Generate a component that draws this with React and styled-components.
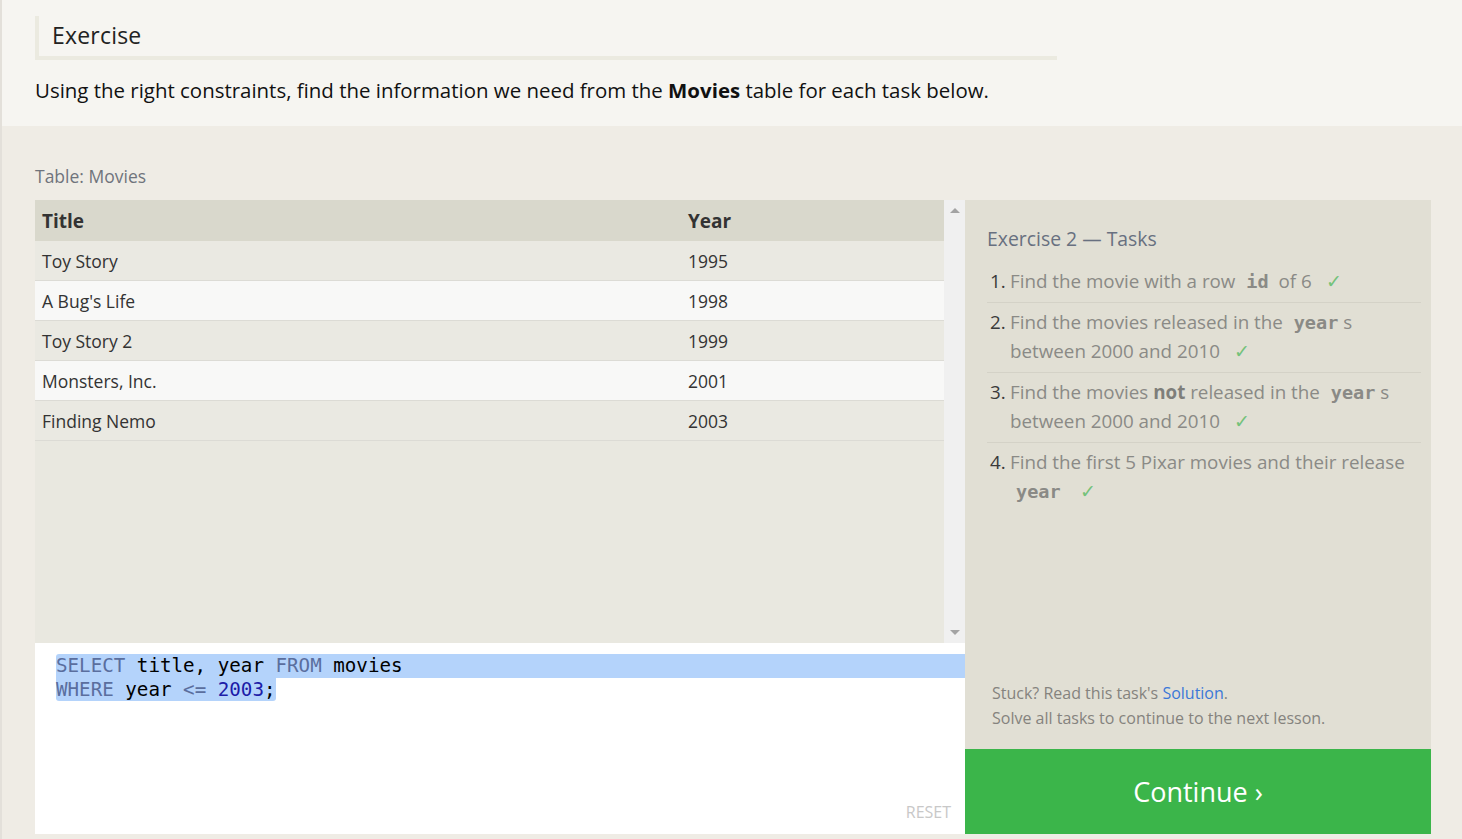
import React from 'react';
import styled, { createGlobalStyle } from 'styled-components';

const GlobalStyle = createGlobalStyle`
  html, body {
    margin: 0;
    padding: 0;
    background: #efece5;
  }
  body {
    font-family: 'Open Sans', 'Noto Sans', sans-serif;
    color: #333;
  }
`;

const Page = styled.div`
  border-left: 2px solid #e3e0da;
  min-height: 839px;
  box-sizing: border-box;
  display: flex;
  flex-direction: column;
`;

const Intro = styled.section`
  background: #f6f5f1;
  height: 126px;
  box-sizing: border-box;
  padding: 16px 0 0 33px;
`;

const Heading = styled.h2`
  margin: 0;
  width: 1022px;
  height: 44px;
  box-sizing: border-box;
  border-left: 4px solid #ebeae0;
  border-bottom: 4px solid #ebeae0;
  padding-left: 13px;
  font-size: 23px;
  font-weight: 400;
  line-height: 38px;
  color: #222;
  letter-spacing: 0.2px;
`;

const Lead = styled.p`
  margin: 16px 0 0;
  font-size: 20.45px;
  line-height: 29px;
  color: #111;
  b {
    font-weight: 700;
  }
`;

const Workspace = styled.section`
  padding: 38px 31px 5px 33px;
`;

const Caption = styled.div`
  font-size: 17.5px;
  color: #6f747c;
  line-height: 24px;
  margin-bottom: 12px;
`;

const Columns = styled.div`
  display: flex;
  height: 634px;
`;

const Left = styled.div`
  width: 930px;
  display: flex;
  flex-direction: column;
`;

const TableWrap = styled.div`
  height: 443px;
  display: flex;
  background: #e9e8e0;
`;

const Table = styled.div`
  flex: 1;
  display: flex;
  flex-direction: column;
`;

const Row = styled.div`
  display: grid;
  grid-template-columns: 646px 1fr;
  height: ${(p) => (p.$head ? '41px' : '40px')};
  align-items: center;
  padding-left: 7px;
  box-sizing: border-box;
  background: ${(p) => (p.$head ? '#d9d8cc' : p.$odd ? '#f8f8f7' : '#eae9e2')};
  border-bottom: ${(p) => (p.$head ? 'none' : '1px solid #dcdbd5')};
  font-size: ${(p) => (p.$head ? '19px' : '17.5px')};
  font-weight: ${(p) => (p.$head ? 700 : 400)};
  color: #333;
`;

const Scrollbar = styled.div`
  width: 21px;
  background: #f0f0f0;
  display: flex;
  flex-direction: column;
  justify-content: space-between;
  align-items: center;
  padding: 8px 0;
  box-sizing: border-box;
`;

const Arrow = styled.div`
  width: 0;
  height: 0;
  border-left: 5px solid transparent;
  border-right: 5px solid transparent;
  ${(p) => (p.$up ? 'border-bottom: 5px solid #a3a3a3;' : 'border-top: 5px solid #a3a3a3;')}
`;

const Editor = styled.div`
  flex: 1;
  background: #fff;
  padding: 11px 0 0 21px;
  position: relative;
  font-family: 'DejaVu Sans Mono', 'Liberation Mono', monospace;
  font-size: 19.2px;
  line-height: 23.5px;
  color: #000;
`;

const CodeLine = styled.div`
  white-space: pre;
  ${(p) =>
    p.$full
      ? 'background: #b4d3fb; border-radius: 3px 0 0 0;'
      : 'span.sel { display: inline-block; background: #b4d3fb; border-radius: 0 0 3px 3px; }'}
`;

const Kw = styled.span`
  color: #5a6e9e;
`;

const Num = styled.span`
  color: #1c1ca8;
`;

const Reset = styled.div`
  position: absolute;
  right: 14px;
  bottom: 10px;
  font-family: 'Open Sans', sans-serif;
  font-size: 16px;
  color: #c8c8c8;
`;

const Right = styled.aside`
  width: 466px;
  display: flex;
  flex-direction: column;
  background: #e1dfd4;
`;

const Tasks = styled.div`
  flex: 1;
  padding: 24px 10px 0 22px;
  display: flex;
  flex-direction: column;
`;

const TasksTitle = styled.h3`
  margin: 0;
  font-size: 19.4px;
  font-weight: 400;
  color: #687080;
  line-height: 30px;
`;

const List = styled.ol`
  margin: 8px 0 0;
  padding: 0;
  list-style: none;
`;

const Item = styled.li`
  display: flex;
  padding: 5px 0;
  border-bottom: ${(p) => (p.$last ? 'none' : '1px solid #d4d2c7')};
  font-size: 18.8px;
  line-height: 29.5px;
  color: #8a8a86;
`;

const ItemNum = styled.span`
  width: 20px;
  flex: none;
  padding-left: 3px;
  color: #3a3a3a;
`;

const ItemText = styled.div`
  flex: 1;
  b {
    color: #7e7e7a;
  }
`;

const Code = styled.code`
  font-family: 'DejaVu Sans Mono', 'Liberation Mono', monospace;
  font-weight: 700;
  font-size: 18.5px;
  color: #8a8a86;
  padding: 0 5px 0 6px;
`;

const Check = styled.span`
  color: #74c27a;
  margin-left: 14px;
`;

const Hint = styled.div`
  margin-top: auto;
  padding: 0 0 18px 27px;
  font-size: 16px;
  line-height: 25px;
  color: #85837e;
  a {
    color: #3b78d8;
    text-decoration: none;
  }
`;

const Continue = styled.button`
  height: 85px;
  border: none;
  background: #3bb54a;
  color: #fff;
  font-family: 'Open Sans', sans-serif;
  font-size: 27px;
  cursor: pointer;
`;

const rows = [
  ['Toy Story', '1995'],
  ["A Bug's Life", '1998'],
  ['Toy Story 2', '1999'],
  ['Monsters, Inc.', '2001'],
  ['Finding Nemo', '2003'],
];

export default function App() {
  return (
    <>
      <GlobalStyle />
      <Page>
        <Intro>
          <Heading>Exercise</Heading>
          <Lead>
            Using the right constraints, find the information we need from the <b>Movies</b> table for each
            task below.
          </Lead>
        </Intro>
        <Workspace>
          <Caption>Table: Movies</Caption>
          <Columns>
            <Left>
              <TableWrap>
                <Table>
                  <Row $head>
                    <span>Title</span>
                    <span>Year</span>
                  </Row>
                  {rows.map(([title, year], i) => (
                    <Row key={title} $odd={i % 2 === 1}>
                      <span>{title}</span>
                      <span>{year}</span>
                    </Row>
                  ))}
                </Table>
                <Scrollbar>
                  <Arrow $up />
                  <Arrow />
                </Scrollbar>
              </TableWrap>
              <Editor>
                <CodeLine $full>
                  <Kw>SELECT</Kw> title, year <Kw>FROM</Kw> movies
                </CodeLine>
                <CodeLine>
                  <span className="sel">
                    <Kw>WHERE</Kw> year <Kw>&lt;=</Kw> <Num>2003</Num>;
                  </span>
                </CodeLine>
                <Reset>RESET</Reset>
              </Editor>
            </Left>
            <Right>
              <Tasks>
                <TasksTitle>Exercise 2 — Tasks</TasksTitle>
                <List>
                  <Item>
                    <ItemNum>1.</ItemNum>
                    <ItemText>
                      Find the movie with a row <Code>id</Code> of 6<Check>✓</Check>
                    </ItemText>
                  </Item>
                  <Item>
                    <ItemNum>2.</ItemNum>
                    <ItemText>
                      Find the movies released in the <Code>year</Code>s between 2000 and 2010
                      <Check>✓</Check>
                    </ItemText>
                  </Item>
                  <Item>
                    <ItemNum>3.</ItemNum>
                    <ItemText>
                      Find the movies <b>not</b> released in the <Code>year</Code>s between 2000 and 2010
                      <Check>✓</Check>
                    </ItemText>
                  </Item>
                  <Item $last>
                    <ItemNum>4.</ItemNum>
                    <ItemText>
                      Find the first 5 Pixar movies and their release <Code>year</Code>
                      <Check>✓</Check>
                    </ItemText>
                  </Item>
                </List>
              </Tasks>
              <Hint>
                Stuck? Read this task's <a href="#">Solution</a>.
                <br />
                Solve all tasks to continue to the next lesson.
              </Hint>
              <Continue>Continue ›</Continue>
            </Right>
          </Columns>
        </Workspace>
      </Page>
    </>
  );
}
